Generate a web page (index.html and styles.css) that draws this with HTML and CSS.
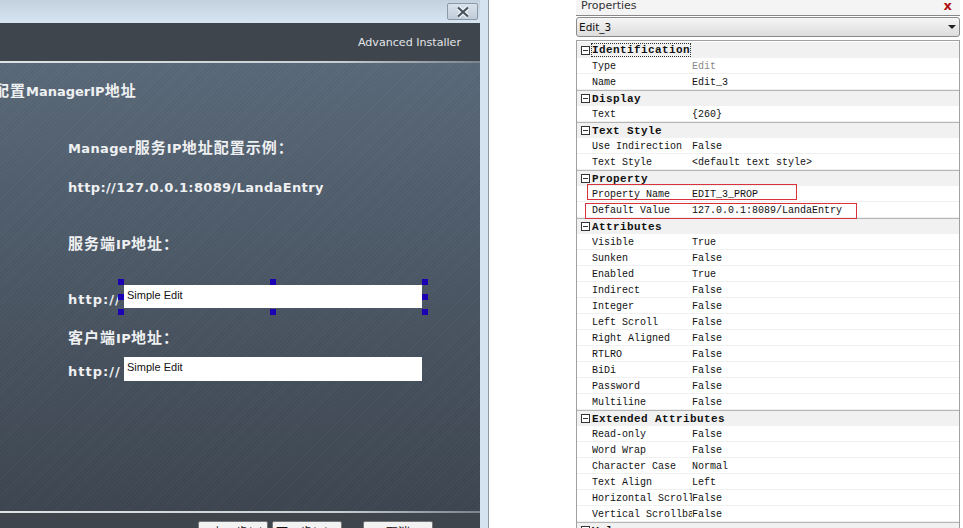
FILE: index.html
```html
<!DOCTYPE html>
<html lang="zh">
<head>
<meta charset="utf-8">
<title>Properties</title>
<link rel="stylesheet" href="styles.css">
</head>
<body>
<div class="stage">
  <section class="installer">
    <div class="titlebar"><button class="close" type="button">
      <svg width="18" height="12" viewBox="0 0 18 12"><path d="M4 1.5 L14 10.5 M14 1.5 L4 10.5" stroke="#eef3f8" stroke-width="4.5" fill="none"/><path d="M4 1.5 L14 10.5 M14 1.5 L4 10.5" stroke="#47525d" stroke-width="2.2" fill="none"/></svg>
    </button></div>
    <div class="window">
      <header class="brand"><span>Advanced Installer</span></header>
      <main class="content">
        <h1 class="page-title"><span class="cjk">配置</span>ManagerIP<span class="cjk">地址</span></h1>
        <p class="line sample">Manager<span class="cjk">服务</span>IP<span class="cjk">地址配置示例：</span></p>
        <p class="line url">http://127.0.0.1:8089/LandaEntry</p>
        <p class="line server"><span class="cjk">服务端</span>IP<span class="cjk">地址：</span></p>
        <div class="field-row first">
          <span class="line">http://</span>
          <div class="edit selected">Simple Edit
            <i class="handle h-tl"></i><i class="handle h-tc"></i><i class="handle h-tr"></i>
            <i class="handle h-ml"></i><i class="handle h-mr"></i>
            <i class="handle h-bl"></i><i class="handle h-bc"></i><i class="handle h-br"></i>
          </div>
        </div>
        <p class="line client"><span class="cjk">客户端</span>IP<span class="cjk">地址：</span></p>
        <div class="field-row second">
          <span class="line">http://</span>
          <div class="edit tall">Simple Edit</div>
        </div>
      </main>
      <footer class="actions">
        <button class="btn" type="button">&lt; 上一步(B)</button>
        <button class="btn" type="button">下一步(N) &gt;</button>
        <button class="btn cancel" type="button">取消</button>
      </footer>
    </div>
  </section>

  <aside class="props">
    <div class="props-head"><span>Properties</span><b class="x">x</b></div>
    <div class="combo"><span>Edit_3</span><i class="caret"></i></div>
    <div class="grid">
      <div class="group"><span class="minus"></span><span class="focus">Identification</span></div>
      <div class="row"><span>Type</span><span class="muted">Edit</span></div>
      <div class="row"><span>Name</span><span>Edit_3</span></div>
      <div class="group"><span class="minus"></span><span>Display</span></div>
      <div class="row"><span>Text</span><span>{260}</span></div>
      <div class="group"><span class="minus"></span><span>Text Style</span></div>
      <div class="row"><span>Use Indirection</span><span>False</span></div>
      <div class="row"><span>Text Style</span><span>&lt;default text style&gt;</span></div>
      <div class="group"><span class="minus"></span><span>Property</span></div>
      <div class="row"><span>Property Name</span><span>EDIT_3_PROP</span></div>
      <div class="row"><span>Default Value</span><span>127.0.0.1:8089/LandaEntry</span></div>
      <div class="group"><span class="minus"></span><span>Attributes</span></div>
      <div class="row"><span>Visible</span><span>True</span></div>
      <div class="row"><span>Sunken</span><span>False</span></div>
      <div class="row"><span>Enabled</span><span>True</span></div>
      <div class="row"><span>Indirect</span><span>False</span></div>
      <div class="row"><span>Integer</span><span>False</span></div>
      <div class="row"><span>Left Scroll</span><span>False</span></div>
      <div class="row"><span>Right Aligned</span><span>False</span></div>
      <div class="row"><span>RTLRO</span><span>False</span></div>
      <div class="row"><span>BiDi</span><span>False</span></div>
      <div class="row"><span>Password</span><span>False</span></div>
      <div class="row"><span>Multiline</span><span>False</span></div>
      <div class="group"><span class="minus"></span><span>Extended Attributes</span></div>
      <div class="row"><span>Read-only</span><span>False</span></div>
      <div class="row"><span>Word Wrap</span><span>False</span></div>
      <div class="row"><span>Character Case</span><span>Normal</span></div>
      <div class="row"><span>Text Align</span><span>Left</span></div>
      <div class="row"><span>Horizontal Scroll</span><span>False</span></div>
      <div class="row"><span>Vertical Scrollbar</span><span>False</span></div>
      <div class="group"><span class="minus"></span><span>Value</span></div>
    </div>
    <i class="mark mark-a"></i>
    <i class="mark mark-b"></i>
  </aside>
</div>
</body>
</html>
```

FILE: styles.css
```css
* { box-sizing: border-box; }
html, body { margin: 0; padding: 0; height: 100%; background: #fff; overflow: hidden; }
.stage { display: flex; width: 963px; height: 528px; overflow: hidden; }

/* installer window */
.installer {
  width: 489px; height: 528px; flex: none;
  padding-right: 8px;
  background: #d5e2f0;
  border-right: 1px solid #8f9aa6;
  display: flex; flex-direction: column;
}
.titlebar {
  height: 23px; flex: none;
  background: linear-gradient(#c3d0de, #d7e4f2);
  display: flex; justify-content: flex-end; align-items: flex-start;
  padding-top: 3px;
}
.close {
  width: 31px; height: 17px; margin-right: 2px; padding: 0;
  border: 1px solid #8c98a4; border-radius: 2px;
  background: linear-gradient(#d8e2ec, #c0ccd9);
  display: flex; align-items: center; justify-content: center;
}
.window { flex: 1; display: flex; flex-direction: column; min-height: 0; font-family: "DejaVu Sans", "Noto Sans CJK SC", sans-serif; }
.brand {
  height: 38px; flex: none;
  background: #3f454d;
  display: flex; align-items: center; justify-content: flex-end;
  padding: 1px 19px 0 0;
  color: #e2e5e8;
  font-size: 11.1px;
}
.content {
  height: 452px; flex: none;
  border-top: 2px solid;
  border-bottom: 2px solid;
  border-image: linear-gradient(90deg, #dfe3e6, #c9ced2 70%, #7a838c) 1;
  background:
    repeating-linear-gradient(135deg, rgba(255,255,255,.02) 0 1px, rgba(0,0,0,.02) 1px 3px),
    linear-gradient(#5a6979, #3d4651);
  padding-left: 68px;
  color: #eef0f2;
}
.page-title, .line { margin: 0; font-size: 13px; font-weight: 700; line-height: 18px; letter-spacing: .35px; }
.cjk { font-family: "Noto Sans CJK SC", sans-serif; font-size: 15px; letter-spacing: 1px; line-height: 0; }
.page-title { margin-left: -74px; padding-top: 20px; letter-spacing: 0; }
.sample { margin-top: 39px; }
.url { margin-top: 21px; }
.server { margin-top: 39px; }
.field-row { display: flex; align-items: center; gap: 3px; }
.field-row .line { flex: none; width: 53px; white-space: nowrap; letter-spacing: 1px; padding-top: 6px; }
.first { margin-top: 31px; height: 23px; }
.client { margin-top: 22px; }
.second { margin-top: 9px; height: 24px; }
.second .line { padding-top: 5px; }
.edit {
  position: relative;
  width: 298px; height: 100%;
  background: #fff; color: #111;
  font: 11px/13px "Liberation Sans", sans-serif;
  padding: 4px 3px;
}
.handle { position: absolute; width: 6px; height: 6px; background: #1c00b4; }
.h-tl { left: -6px; top: -6px; }
.h-tc { left: 146px; top: -6px; }
.h-tr { right: -6px; top: -6px; }
.h-ml { left: -6px; top: 9px; }
.h-mr { right: -6px; top: 9px; }
.h-bl { left: -6px; bottom: -7px; }
.h-bc { left: 146px; bottom: -7px; }
.h-br { right: -6px; bottom: -7px; }
.actions {
  flex: 1; background: #3f454d;
  display: flex; align-items: flex-start;
  padding: 8px 0 0 198px; gap: 4px;
}
.btn {
  width: 70px; height: 22px; padding: 0;
  border: 1px solid #777; border-radius: 2px;
  background: #f2f2f2; color: #111;
  font: 12px/18px "Noto Sans CJK SC", sans-serif;
}
.cancel { margin-left: 17px; }

/* properties panel */
.props {
  position: relative;
  margin-left: 87px; width: 385px; height: 528px; flex: none;
  font-family: "Liberation Mono", "Noto Sans CJK SC", monospace;
  font-size: 10px; color: #111;
}
.props-head {
  height: 16px; padding: 0 6px 4px 5px; width: 384px;
  background: #f4f4f4;
  border-bottom: 1px solid #888;
  display: flex; justify-content: space-between; align-items: center;
  font: 11px "DejaVu Sans", sans-serif; color: #333;
}
.x { color: #b01010; font: 700 13px/10px "DejaVu Sans", sans-serif; margin-right: 2px; }
.combo {
  margin-top: 1px; height: 20px; width: 384px;
  border: 1px solid #8a8a8a; border-radius: 3px;
  background: linear-gradient(#f6f6f6, #dcdcdc);
  display: flex; justify-content: space-between; align-items: center;
  padding: 0 3px 0 2px;
  font: 10.5px "DejaVu Sans", sans-serif;
}
.caret { width: 0; height: 0; border: 4px solid transparent; border-top: 4px solid #222; border-bottom: 0; }
.grid { margin-top: 3px; width: 384px; height: 500px; padding-top: 1px; border: 1px solid #a0a0a0; overflow: hidden; background: #fff; }
.group {
  height: 16px; display: flex; align-items: center;
  background: #f1f1f1; border-top: 1px solid #b5b5b5;
  padding-left: 4px; font-weight: 700; font-size: 11px; letter-spacing: .4px; color: #111;
}
.grid .group:first-child { border-top: 0; }
.minus {
  width: 9px; height: 9px; margin-right: 2px; flex: none;
  border: 1px solid #333; background: linear-gradient(#333,#333) center / 5px 1px no-repeat #fff;
}
.focus { outline: 1px dotted #333; outline-offset: 0; }
.row {
  height: 16px; display: flex; align-items: center;
  padding: 1px 0 0 15px; border-bottom: 1px solid #f0f0f0;
  white-space: nowrap;
}
.row span:first-child { width: 100px; overflow: hidden; flex: none; }
.muted { color: #888; }
.mark { position: absolute; border: 1px solid #d8323c; pointer-events: none; }
.mark-a { left: 11px; top: 184px; width: 210px; height: 16px; }
.mark-b { left: 9px; top: 203px; width: 272px; height: 16px; }
```
